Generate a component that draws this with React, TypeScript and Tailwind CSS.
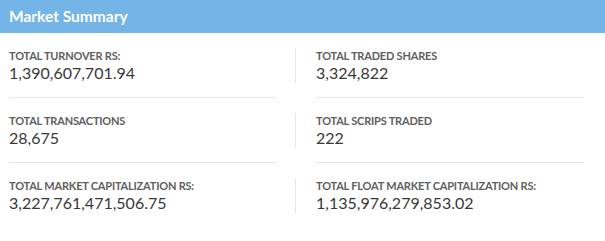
const ITEMS: [string, string][][] = [
  [
    ['TOTAL TURNOVER RS:', '1,390,607,701.94'],
    ['TOTAL TRADED SHARES', '3,324,822'],
  ],
  [
    ['TOTAL TRANSACTIONS', '28,675'],
    ['TOTAL SCRIPS TRADED', '222'],
  ],
  [
    ['TOTAL MARKET CAPITALIZATION RS:', '3,227,761,471,506.75'],
    ['TOTAL FLOAT MARKET CAPITALIZATION RS:', '1,135,976,279,853.02'],
  ],
];

function Stat({ label, value }: { label: string; value: string }) {
  return (
    <>
      <p className="text-[11px] leading-[15px] font-bold text-[#5e5e5e] tracking-[-0.2px]">{label}</p>
      <p className="text-[16px] leading-[20px] text-[#383838]">{value}</p>
    </>
  );
}

export default function App() {
  return (
    <div className="w-[605px] h-[241px] bg-white" style={{ fontFamily: 'Lato, "Open Sans", sans-serif' }}>
      <div className="h-[33px] bg-[#74b4e6] px-[9px] pt-[6px]">
        <h2 className="text-[15.5px] leading-[20px] font-bold text-white">Market Summary</h2>
      </div>
      <div className="px-[9px] pt-[15px]">
        {ITEMS.map((row, i) => (
          <div key={i} className="flex">
            <div className="w-[267px]">
              <div className="h-[35px]">
                <Stat label={row[0][0]} value={row[0][1]} />
              </div>
              {i < ITEMS.length - 1 && <div className="mt-[14px] mb-[15px] h-px bg-[#e6e6e6]" />}
            </div>
            <div className="ml-[19px] w-[289px]">
              <div className="h-[35px] border-l border-[#e6e6e6] pl-[20px]">
                <Stat label={row[1][0]} value={row[1][1]} />
              </div>
              {i < ITEMS.length - 1 && <div className="ml-[21px] w-[268px] mt-[14px] mb-[15px] h-px bg-[#e6e6e6]" />}
            </div>
          </div>
        ))}
      </div>
    </div>
  );
}
